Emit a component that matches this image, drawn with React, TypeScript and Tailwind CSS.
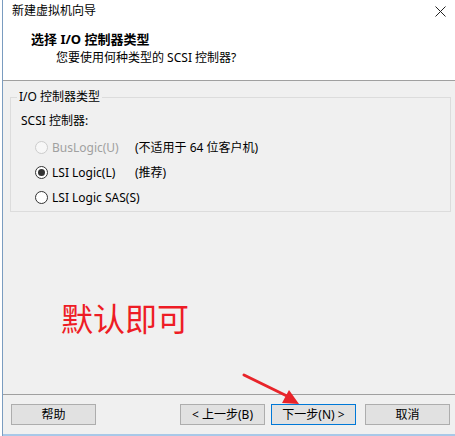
import React from 'react';

const font = { fontFamily: '"Noto Sans", "Noto Sans CJK SC", "Microsoft YaHei", sans-serif' };

const Radio = ({ checked = false, disabled = false }: { checked?: boolean; disabled?: boolean }) => (
  <span
    className={`w-[13px] h-[13px] shrink-0 rounded-full border flex items-center justify-center ${
      disabled ? 'border-[#cccccc] bg-[#f7f7f7]' : 'border-[#333333] bg-white'
    }`}
  >
    {checked && <span className="w-[7px] h-[7px] rounded-full bg-[#333333]" />}
  </span>
);

const Button = ({ label, primary = false }: { label: string; primary?: boolean }) => (
  <button
    className={`h-[21px] w-[85px] text-[12px] leading-none border bg-[#e1e1e1] ${
      primary ? 'border-[#0078d7]' : 'border-[#adadad]'
    }`}
  >
    {label}
  </button>
);

export default function App() {
  const options = [
    { label: 'BusLogic(U)', note: '(不适用于 64 位客户机)', disabled: true },
    { label: 'LSI Logic(L)', note: '(推荐)', checked: true },
    { label: 'LSI Logic SAS(S)' },
  ];

  return (
    <div className="w-[455px] h-[436px] bg-white pl-[2px] overflow-hidden" style={font}>
      <div className="relative h-full border-l border-[#7a9cc0] bg-[#f0f0f0] flex flex-col text-[12px] text-black">
        {/* header */}
        <div className="h-[81px] shrink-0 bg-white border-b border-[#a0a0a0]">
          <div className="h-[22px] flex items-center justify-between pl-[9px] pr-[9px]">
            <span className="text-[12px]">新建虚拟机向导</span>
            <svg width="11" height="11" viewBox="0 0 11 11" className="mt-[1px]">
              <path d="M0.5 0.5 L10.5 10.5 M10.5 0.5 L0.5 10.5" stroke="#222" strokeWidth="1" />
            </svg>
          </div>
          <div className="pl-[28px] pt-[9px] font-bold text-[13px] leading-[17px]">选择 I/O 控制器类型</div>
          <div className="pl-[53px] pt-[2px] text-[12px] leading-[16px]">您要使用何种类型的 SCSI 控制器?</div>
        </div>

        {/* group box */}
        <fieldset className="mt-[9px] ml-[7px] mr-[4px] h-[122px] shrink-0 border border-[#dcdcdc] px-[10px]">
          <legend className="ml-[-4px] px-[2px] leading-[14px]">I/O 控制器类型</legend>
          <div className="mt-[9px] leading-[16px]">SCSI 控制器:</div>
          <div className="mt-[10px] flex flex-col gap-[8px] pl-[14px]">
            {options.map((o) => (
              <div key={o.label} className="flex items-center h-[17px] whitespace-nowrap">
                <Radio checked={o.checked} disabled={o.disabled} />
                <span className={`ml-[4px] w-[83px] shrink-0 ${o.disabled ? 'text-[#a0a0a0]' : ''}`}>{o.label}</span>
                {o.note && <span>{o.note}</span>}
              </div>
            ))}
          </div>
        </fieldset>

        {/* annotation */}
        <div className="mt-[89px] pl-[58px] text-[32px] leading-[36px] text-[#ee1c25]">默认即可</div>

        <svg className="absolute left-[236px] top-[368px]" width="70" height="40" viewBox="0 0 70 40">
          <line x1="5" y1="7" x2="50" y2="29" stroke="#e8242a" strokeWidth="3" strokeLinecap="round" />
          <polygon points="60,36 43,35 50,22" fill="#e8242a" />
        </svg>

        {/* footer */}
        <div className="mt-auto border-t border-[#a0a0a0] h-[40px] flex items-start pt-[9px] pl-[8px] pr-[5px]">
          <Button label="帮助" />
          <div className="ml-auto flex gap-[6px]">
            <Button label="< 上一步(B)" />
            <Button label="下一步(N) >" primary />
          </div>
          <div className="ml-[9px]">
            <Button label="取消" />
          </div>
        </div>
        <div className="h-[2px] bg-[#a8c8e8]" />
      </div>
    </div>
  );
}
